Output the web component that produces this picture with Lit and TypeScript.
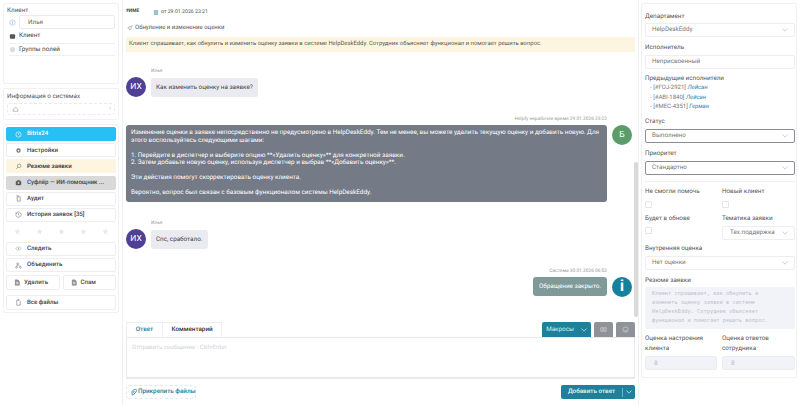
import { LitElement, html, css, svg } from "lit";
import { customElement } from "lit/decorators.js";

const ic = (p: unknown, c = "#777") => html`<svg class="ic" viewBox="0 0 16 16" fill="none" stroke=${c} stroke-width="1.4">${p}</svg>`;
const icons: Record<string, unknown> = {
  clock: svg`<circle cx="8" cy="8" r="6"/><path d="M8 4.5V8l2.5 1.5"/>`,
  gear: svg`<circle cx="8" cy="8" r="3.5" stroke-width="3"/>`,
  search: svg`<circle cx="9.5" cy="6.5" r="4"/><path d="M6.5 9.5 2.5 13.5"/>`,
  robot: svg`<rect x="2.5" y="5" width="11" height="8.5" rx="1.5" fill="#555" stroke="#555"/><circle cx="8" cy="9" r="2" fill="#ddd" stroke="none"/><path d="M6 5V3h4v2" stroke="#555"/>`,
  copy: svg`<path d="M5 4h7v10H5zM3 2h6"/>`,
  history: svg`<path d="M3 5a6 6 0 1 1-1 3M2 3v3h3M8 5v3.5l2 1"/>`,
  eye: svg`<path d="M1.5 8S4 4.5 8 4.5 14.500 8 14.500 8 12 11.500 8 11.500 1.500 8 1.500 8z" stroke="#aaa"/><circle cx="8" cy="8" r="1.500" fill="#aaa" stroke="none"/>`,
  merge: svg`<circle cx="6" cy="4" r="2"/><circle cx="3.500" cy="12" r="2"/><circle cx="12" cy="12" r="2"/><path d="M6 6 4 10M7 6l4 4"/>`,
  file: svg`<path d="M3 2h6l3 3v9H3z" fill="#999" stroke="#777"/><path d="M5 8h5M5 11h5" stroke="#fff"/>`,
  files: svg`<path d="M4 3h5l3 3v8H4z"/><path d="M6 1h4" />`,
  star: svg`<path d="M8 1.500l2 4.300 4.600.6-3.400 3.200.9 4.600L8 11.900l-4.100 2.300.9-4.600L1.400 6.400 6 5.800z" fill="#e6e9ef" stroke="none"/>`,
};

@customElement("app-root")
export class AppRoot extends LitElement {
  static styles = css`
    :host { display: block; width: 800px; height: 405px; overflow: hidden; background: #fff; color: #444; font: 6.3px/1.2 Roboto, "Liberation Sans", sans-serif; text-rendering: geometricPrecision; }
    * { box-sizing: border-box; }
    .page { display: flex; height: 405px; }
    .ic { width: 7px; height: 7px; flex: none; }
    .card { border: 1px solid #f0f1f4; border-radius: 2px; background: #fff; }

    .left { width: 123px; flex: none; padding: 3px 3px 0 3px; display: flex; flex-direction: column; gap: 4px; border-right: 1px solid #eceef2; }
    .client { height: 81px; padding: 2px 3px 0; flex: none; }
    .ttl { color: #555; height: 8px; line-height: 8px; }
    .crow { display: flex; align-items: center; gap: 3px; margin-left: 2px; }
    .name { flex: 1; height: 14px; border: 1px solid #e9ebf0; border-radius: 2px; padding-left: 8px; line-height: 12px; color: #666; }
    .row1 { margin-top: 1px; }
    .row2 { height: 15px; border-bottom: 1px solid #eef0f3; }
    .row3 { height: 12px; border-bottom: 1px solid #eef0f3; }
    .sys { height: 32px; padding: 3px 3px 0; flex: none; }
    .sysbox { height: 12px; margin-top: 3px; border: 1px dashed #e8eaef; border-radius: 2px; display: flex; align-items: center; justify-content: space-between; padding: 0 3px 0 4px; color: #aaa; }
    .menu { padding: 2px 2px 0; height: 189px; display: flex; flex-direction: column; gap: 2.2px; flex: none; }
    .btn { height: 14px; border: 1px solid #eceef2; border-radius: 2px; display: flex; align-items: center; gap: 5px; padding-left: 8px; color: #444; font-size: 6.1px; font-weight: 500; white-space: nowrap; background: #fff; flex: none; }
    .btn.blue { background: #27c0f5; border-color: #27c0f5; color: #fff; }
    .btn.yellow { background: #fdf5df; border-color: #fdf5df; color: #333; }
    .btn.gray { background: #d9d9d9; border-color: #d9d9d9; }
    .stars { display: flex; justify-content: space-between; align-items: center; padding: 0 7.5px; height: 15.6px; flex: none; }
    .two { display: flex; gap: 3px; margin-top: .8px; }
    .two .btn { flex: 1; padding-left: 7px; height: 15px; gap: 3px; }
    .all { margin-top: 2.4px; }
    .all .btn { height: 15px; }

    .mid { width: 516px; flex: none; padding: 0 0 0 3px; display: flex; flex-direction: column; border-right: 1px solid #eef0f3; }
    .head { height: 24px; display: flex; align-items: center; color: #555; font-size: 5.2px; flex: none; }
    .head b { width: 27px; font-size: 4.8px; color: #444; }
    .head .ic { width: 6px; height: 7px; margin-right: 2px; }
    .subj { height: 13px; display: flex; align-items: center; gap: 2px; color: #555; padding: 0 0 5px 1px; flex: none; font-size: 6px; }
    .subj .ic { width: 6px; height: 6px; }
    .banner { height: 15px; background: #fdf5df; color: #555; line-height: 15px; padding-left: 3px; white-space: nowrap; overflow: hidden; width: 509px; flex: none; font-size: 5.9px; }
    .feed { height: 270px; width: 512px; position: relative; padding-right: 31px; flex: none; }
    .bar { position: absolute; right: 0; top: 110px; width: 4px; height: 155px; background: #d9d9d9; border-radius: 2px; }
    .msg { display: flex; gap: 5px; align-items: flex-end; }
    .msg.out { justify-content: flex-end; align-items: flex-start; gap: 5px; }
    .av { width: 20px; height: 20px; border-radius: 50%; flex: none; color: #fff; display: grid; place-items: center; font-size: 8.5px; background: #4f3f96; }
    .av.g { background: #5b9c6b; margin-right: -25px; }
    .av.t { background: #17809b; margin-right: -25px; font: 700 16px "Liberation Sans", sans-serif; }
    .who { font-size: 4.8px; color: #999; height: 6px; line-height: 6px; margin-bottom: 3px; }
    .meta { font-size: 4.8px; color: #999; text-align: right; height: 6px; line-height: 6px; margin-bottom: 2px; }
    .bub { background: #eaebf0; border-radius: 3px; color: #444; height: 19px; line-height: 19px; padding: 0 5px; font-size: 6.3px; display: block; white-space: nowrap; }
    .w1 { width: 107px; }
    .w2 { width: 57px; }
    .dark { width: 481px; flex: none; height: 77px; background: #747b87; border-radius: 3px; color: #fff; padding: 4px 3px 0 5px; font-size: 6.37px; line-height: 7.7px; }
    .dark p { margin: 0 0 7.2px; }
    .sysb { background: #7f9a99; color: #fff; width: 74px; text-align: center; padding: 0; font-size: 6.3px; }
    .m1 { margin-top: 17px; }
    .m2 { margin-top: 20px; }
    .m3 { margin-top: 19px; }
    .m4 { margin-top: 20px; }
    .tabs { display: flex; height: 15px; width: 509px; align-items: stretch; flex: none; }
    .tab { border: 1px solid #eceef2; border-bottom: 0; display: grid; place-items: center; font-weight: 500; }
    .tab.a { width: 37px; color: #17809b; }
    .tab.b { width: 59px; color: #333; border-left: 0; }
    .sp { flex: 1; }
    .mac { width: 49px; background: #1f809b; color: #d7eef4; border-radius: 2px 2px 0 0; display: flex; align-items: center; justify-content: center; gap: 7px; margin-right: 3px; }
    .gb { width: 19px; background: #8f9399; color: #ddd; border-radius: 2px 2px 0 0; display: grid; place-items: center; margin-right: 3px; }
    .gb:last-child { margin-right: 0; }
    .editor { width: 509px; height: 42px; border: 1px solid #e7e9ee; border-bottom-width: 2px; padding: 6px 5px; color: #cfd2da; font-size: 6px; flex: none; }
    .foot { width: 509px; display: flex; justify-content: space-between; margin-top: 6px; height: 14px; flex: none; }
    .attach { width: 70px; border: 1px dashed #e4e7ec; border-radius: 3px; color: #17809b; display: flex; align-items: center; gap: 1px; padding-left: 3px; font-weight: 500; white-space: nowrap; }
    .add { width: 74px; background: #1f809b; color: #e9f6f9; border-radius: 2px; display: flex; align-items: center; font-weight: 500; white-space: nowrap; }
    .add span:first-child { flex: 1; text-align: center; }
    .add span:last-child { width: 13px; border-left: 1px solid #6fb0c2; height: 9px; display: grid; place-items: center; }

    .side { width: 156px; height: 375px; margin: 3px 3px 0 auto; flex: none; padding: 0 1px 0 3px; color: #555; }
    label { display: block; height: 8px; line-height: 8px; color: #555; white-space: nowrap; }
    .sel { height: 14px; border: 1px solid #eceef2; border-radius: 2px; display: flex; align-items: center; justify-content: space-between; padding: 0 6px 0 6px; color: #777; margin-top: 4px; white-space: nowrap; }
    .sel.first { margin-top: 3px; }
    .sel.dark-b { border-color: #8a8d92; }
    .sel.topic { margin-top: 4px; padding-left: 7px; height: 13.500px; }
    .prev { height: 9.500px; line-height: 9.500px; padding-left: 5px; color: #777; font-size: 6px; }
    .prev i { color: #2f85a8; }
    .grid { display: grid; grid-template-columns: 72px 73px; column-gap: 5px; }
    .cb { width: 7px; height: 7px; border: 1px solid #e3e5ea; border-radius: 1px; }
    .cb.c1 { margin-top: 6px; }
    .cb.c2 { margin-top: 5px; }
    .ta { height: 42px; background: #f1f3f8; border-radius: 2px; margin-top: 3px; padding: 3.500px 14px 0 7px; font: 5.35px/8.900px "DejaVu Sans Mono", "Liberation Mono", monospace; color: #bcc0ca; }
    .num { height: 14px; background: #f1f3f8; border: 1px solid #ebedf1; border-radius: 2px; padding-left: 8px; line-height: 12px; color: #b4b9c4; margin-top: 3px; }
    .lab2 { line-height: 10px; height: 20px; white-space: normal; }
    hr { border: 0; border-top: 1px solid #eef0f3; margin: 6px 0 0; }
    .chev { width: 6px; height: 4px; flex: none; }
    .l1 { margin-top: 8px; } .l2 { margin-top: 6px; } .l3 { margin-top: 5px; margin-bottom: 1px; } .l4 { margin-top: 5.500px; }
    .l5 { margin-top: 6px; } .l6 { margin-top: 4px; } .l7 { margin-top: 6px; } .g1 { margin-top: 5px; } .g2 { margin-top: 6px; } .g3 { margin-top: 4px; }
  `;

  private chev(c = "#bbb") {
    return html`<svg class="chev" viewBox="0 0 6 4" fill="none" stroke=${c} stroke-width=".7"><path d="M.5.5 3 3.200 5.500.5"/></svg>`;
  }
  private btn(icon: string, t: string, cls = "", c = "#777") {
    return html`<div class="btn ${cls}">${ic(icons[icon], c)}${t}</div>`;
  }
  private sel(t: string, cls = "") {
    return html`<div class="sel ${cls}"><span>${t}</span>${this.chev()}</div>`;
  }

  render() {
    return html`<div class="page">
      <div class="left">
        <div class="card client">
          <div class="ttl">Клиент</div>
          <div class="crow row1">${ic(svg`<circle cx="8" cy="8" r="6" stroke="#9db8d8"/><path d="M8 5v6" stroke="#9db8d8"/>`)}<div class="name">Илья</div></div>
          <div class="crow row2">${ic(svg`<rect x="2" y="3" width="12" height="10" rx="2" fill="#555" stroke="none"/>`)}Клиент</div>
          <div class="crow row3">${ic(svg`<circle cx="8" cy="8" r="6" fill="#ddd" stroke="none"/>`)}Группы полей</div>
        </div>
        <div class="card sys">
          <div class="ttl">Информация о системах</div>
          <div class="sysbox">${ic(svg`<path d="M2 12h12l-2-6-4-3-4 3z" stroke="#999"/>`)}<span>›</span></div>
        </div>
        <div class="card menu">
          ${this.btn("clock", "Bitrix24", "blue", "#fff")}
          ${this.btn("gear", "Настройки")}
          ${this.btn("search", "Резюме заявки", "yellow")}
          ${this.btn("robot", "Суфлёр — ИИ-помощник ...", "gray")}
          ${this.btn("copy", "Аудит")}
          ${this.btn("history", "История заявок [35]")}
          <div class="stars">${[0, 1, 2, 3, 4].map(() => ic(icons.star))}</div>
          ${this.btn("eye", "Следить")}
          ${this.btn("merge", "Объединить")}
          <div class="two">${this.btn("file", "Удалить")}${this.btn("file", "Спам")}</div>
          <div class="all">${this.btn("files", "Все файлы")}</div>
        </div>
      </div>

      <div class="mid">
        <div class="head"><b>#ИМЕ</b>${ic(svg`<rect x="3" y="2" width="10" height="12" fill="#9fc3d6" stroke="#8fb3c6"/>`)} от 29.01.2026 23:21</div>
        <div class="subj">${ic(svg`<path d="M14 2 2 7l4 2 1 5 2-3 5-9z" stroke="#888"/>`)}Обнуление и изменение оценки</div>
        <div class="banner">Клиент спрашивает, как обнулить и изменить оценку заявки в системе HelpDeskEddy. Сотрудник объясняет функционал и помогает решить вопрос.</div>
        <div class="feed">
          <div class="bar"></div>
          <div class="msg m1"><div class="av">ИХ</div><div><div class="who">Илья</div><div class="bub w1">Как изменить оценку на заявке?</div></div></div>
          <div class="m2">
            <div class="meta">Helpfy нерабочее время 29.01.2026 23:22</div>
            <div class="msg out"><div class="dark">
              <p>Изменение оценки в заявке непосредственно не предусмотрено в HelpDeskEddy. Тем не менее, вы можете удалить текущую оценку и добавить новую. Для этого воспользуйтесь следующими шагами:</p>
              <p>1. Перейдите в диспетчер и выберите опцию **«Удалить оценку»** для конкретной заявки.<br>2. Затем добавьте новую оценку, используя диспетчер и выбрав **«Добавить оценку»**.</p>
              <p>Эти действия помогут скорректировать оценку клиента.</p>
              <p>Вероятно, вопрос был связан с базовым функционалом системы HelpDeskEddy.</p>
            </div><div class="av g">Б</div></div>
          </div>
          <div class="msg m3"><div class="av">ИХ</div><div><div class="who">Илья</div><div class="bub w2">Спс, сработало.</div></div></div>
          <div class="m4">
            <div class="meta">Система 30.01.2026 06:52</div>
            <div class="msg out"><div class="bub sysb">Обращение закрыто.</div><div class="av t">i</div></div>
          </div>
        </div>
        <div class="tabs">
          <div class="tab a">Ответ</div><div class="tab b">Комментарий</div><div class="sp"></div>
          <div class="mac">Макросы ${this.chev("#d7eef4")}</div>
          <div class="gb">${ic(svg`<path d="M2 4h5v8H2zM9 4h5v8H9z" stroke="#ddd"/>`)}</div>
          <div class="gb">${ic(svg`<circle cx="8" cy="8" r="6" stroke="#ddd"/><path d="M5 10c2 1.500 4 1.500 6 0" stroke="#ddd"/>`)}</div>
        </div>
        <div class="editor">Отправить сообщение - Ctrl+Enter</div>
        <div class="foot">
          <div class="attach">${ic(svg`<path d="M11 4 5 10a2 2 0 0 0 3 3l6-7a3.500 3.500 0 0 0-5-5L3 8" stroke="#17809b" stroke-width="2"/>`)}Прикрепить файлы</div>
          <div class="add"><span>Добавить ответ</span><span>${this.chev("#e9f6f9")}</span></div>
        </div>
      </div>

      <div class="card side">
        <label class="l1">Департамент</label>${this.sel("HelpDeskEddy", "first")}
        <label class="l2">Исполнитель</label><div class="sel">Неприсвоенный</div>
        <label class="l3">Предыдущие исполнители</label>
        <div class="prev">- [#FOJ-2921] <i>Лейсан</i></div>
        <div class="prev">- [#ABI-1840] <i>Лейсан</i></div>
        <div class="prev">- [#MEC-4351] <i>Герман</i></div>
        <label class="l4">Статус</label>${this.sel("Выполнено", "dark-b")}
        <label class="l5">Приоритет</label>${this.sel("Стандартно", "dark-b")}
        <hr />
        <div class="grid g1">
          <div><label>Не смогли помочь</label><div class="cb c1"></div></div>
          <div><label>Новый клиент</label><div class="cb c1"></div></div>
        </div>
        <div class="grid g2">
          <div><label>Будет в обнове</label><div class="cb c2"></div></div>
          <div><label>Тематика заявки</label><div class="sel topic"><span>Тех.поддержка</span>${this.chev()}</div></div>
        </div>
        <label class="l6">Внутренняя оценка</label>${this.sel("Нет оценки")}
        <label class="l7">Резюме заявки</label>
        <div class="ta">Клиент спрашивает, как обнулить и изменить оценку заявки в системе HelpDeskEddy. Сотрудник объясняет функционал и помогает решить вопрос.</div>
        <div class="grid g3">
          <div><label class="lab2">Оценка настроения клиента</label><div class="num">8</div></div>
          <div><label class="lab2">Оценка ответов сотрудника</label><div class="num">8</div></div>
        </div>
      </div>
    </div>`;
  }
}
